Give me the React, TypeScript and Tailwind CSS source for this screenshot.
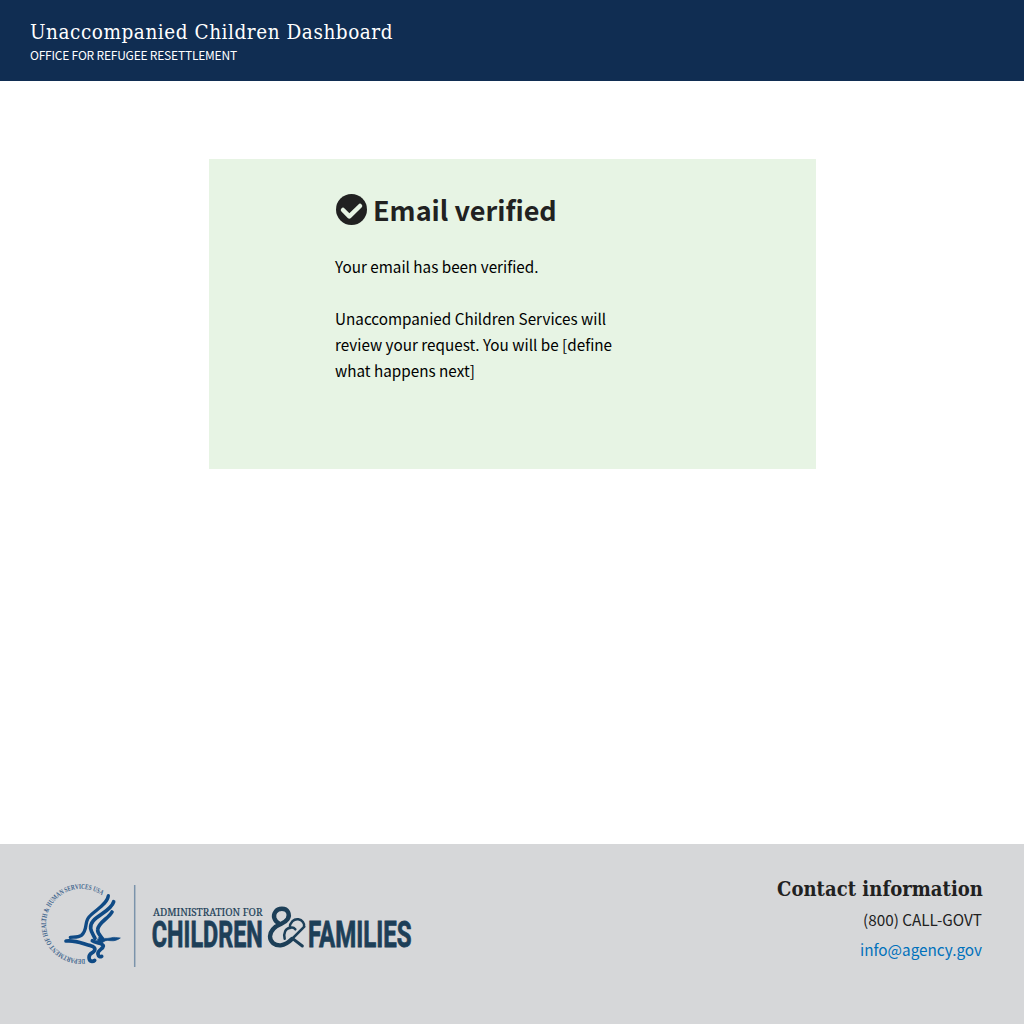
const sans = "font-['Noto_Sans_CJK_SC','Noto_Sans',sans-serif]";
const serif = "font-['DejaVu_Serif_Condensed','DejaVu_Serif',serif]";

function CheckCircle() {
  return (
    <svg className="mb-px ml-px mr-[6px] block size-[31px] shrink-0" viewBox="0 0 93 93" aria-hidden="true">
      <circle cx="46.5" cy="46.5" r="46.5" fill="#212121" />
      <path
        d="M21 48L40 67L72 36"
        fill="none"
        stroke="#e7f4e4"
        strokeWidth="13.5"
        strokeLinecap="round"
        strokeLinejoin="round"
      />
    </svg>
  );
}

function AgencyLogo() {
  return (
    <svg
      className="block h-[92px] w-[380px] overflow-visible"
      viewBox="36 880 380 92"
      role="img"
      aria-label="Administration for Children & Families"
    >
      <path id="seal" d="M85 959 A35.2 35.2 0 1 1 116.5 924" fill="none" />
      <text fontFamily="Liberation Serif, serif" fontWeight="700" fontSize="7.2" fill="#41658d">
        <textPath href="#seal" textLength="136" lengthAdjust="spacingAndGlyphs">
          DEPARTMENT OF HEALTH &amp; HUMAN SERVICES USA
        </textPath>
      </text>
      <g
        transform="translate(62 888) scale(.33333)"
        fill="none"
        stroke="#0f4a85"
        strokeLinecap="round"
        strokeLinejoin="round"
      >
        <path strokeWidth="10" d="M139 23C137 49 98 67 81 87C66 104 78 126 58 142C50 148 39 147 25 148" />
        <path strokeWidth="11" d="M155 41C148 66 110 80 94 98C77 119 90 133 99 151" />
        <path strokeWidth="11" d="M150 72C140 91 108 104 107 125C106 137 116 142 121 152" />
        <path fill="#0f4a85" strokeWidth="2" d="M112 147C127 154 139 151 149 149C157 147 165 149 175 150C166 156 158 160 144 158C133 156 126 158 121 165L105 160Z" />
        <path strokeWidth="11" d="M12 159C44 155 67 170 86 173C103 178 101 187 91 194C76 202 80 219 90 220C94 220 96 219 98 217" />
        <path strokeWidth="11" d="M91 158C103 166 125 166 124 174C123 184 105 186 108 199C109 206 115 207 119 205" />
      </g>
      <path d="M134.7 885V967" stroke="#7b93ab" strokeWidth="1.5" />
      <g fill="#1d3f58">
        <text x="153" y="915.5" fontFamily="Noto Serif, DejaVu Serif, serif" fontSize="10.8" textLength="109.5" lengthAdjust="spacingAndGlyphs" stroke="#1d3f58" strokeWidth=".2">
          ADMINISTRATION FOR
        </text>
        <g fontFamily="Roboto, sans-serif" fontWeight="700" fontSize="36" stroke="#1d3f58" strokeWidth=".8">
          <text x="151.8" y="946.7" textLength="111" lengthAdjust="spacingAndGlyphs">CHILDREN</text>
          <text x="308" y="946.7" textLength="103.5" lengthAdjust="spacingAndGlyphs">FAMILIES</text>
        </g>
      </g>
      <g
        transform="translate(264 902) scale(.33333)"
        fill="none"
        stroke="#1d3f58"
        strokeLinecap="round"
        strokeLinejoin="round"
      >
        <path strokeWidth="13" d="M46 65C30 57 26 41 34 30C43 17 65 17 72 30C80 46 68 58 52 65C30 74 19 85 18 103C18 121 33 131 50 130C66 128 74 121 84 111" />
        <path strokeWidth="7.5" d="M84 111L121 74M62 110C58 92 65 79 77 78C78 60 90 50 103 52C114 54 123 63 120 75M77 78C84 75 90 77 94 82" />
        <path strokeWidth="9" d="M86 110L115 132" />
      </g>
    </svg>
  );
}

export default function App() {
  return (
    <div className={`flex h-screen flex-col bg-white text-[#212121] ${sans}`}>
      <header className="h-[81px] bg-[#102d52] pl-[30px] pt-[18px] text-white">
        <h1 className={`h-7 whitespace-nowrap text-[20.5px] leading-7 tracking-[0.55px] ${serif}`}>
          Unaccompanied Children Dashboard
        </h1>
        <p className="-mt-px h-5 whitespace-nowrap text-[12px] leading-5 tracking-[-0.21px]">
          OFFICE FOR REFUGEE RESETTLEMENT
        </p>
      </header>

      <main className="flex-1 pl-[209px] pt-[78px]">
        <section className="h-[310px] w-[607px] bg-[#e7f4e4] pl-[126px] pt-[31px]">
          <div className="flex h-10 items-center whitespace-nowrap">
            <CheckCircle />
            <h2 className="text-[27px] font-bold leading-10">Email verified</h2>
          </div>
          <div className="mt-[23px] whitespace-nowrap text-[15.25px] leading-[26px] text-black">
            <p>Your email has been verified.</p>
            <p className="mt-[26px]">
              Unaccompanied Children Services will
              <br />
              review your request. You will be [define
              <br />
              what happens next]
            </p>
          </div>
        </section>
      </main>

      <footer className="flex h-[180px] justify-between bg-[#d6d7d9] pl-9 pr-[41px]">
        <div className="pt-9">
          <AgencyLogo />
        </div>
        <div className="whitespace-nowrap pt-[30px] text-right text-[15.3px] leading-[30px]">
          <h3 className={`text-[20px] font-bold leading-[30px] tracking-[0.05px] ${serif}`}>
            Contact information
          </h3>
          <p className="pr-px">(800) CALL-GOVT</p>
          <a className="block pr-px text-[#0071bc]" href="mailto:info@agency.gov">
            info@agency.gov
          </a>
        </div>
      </footer>
    </div>
  );
}
